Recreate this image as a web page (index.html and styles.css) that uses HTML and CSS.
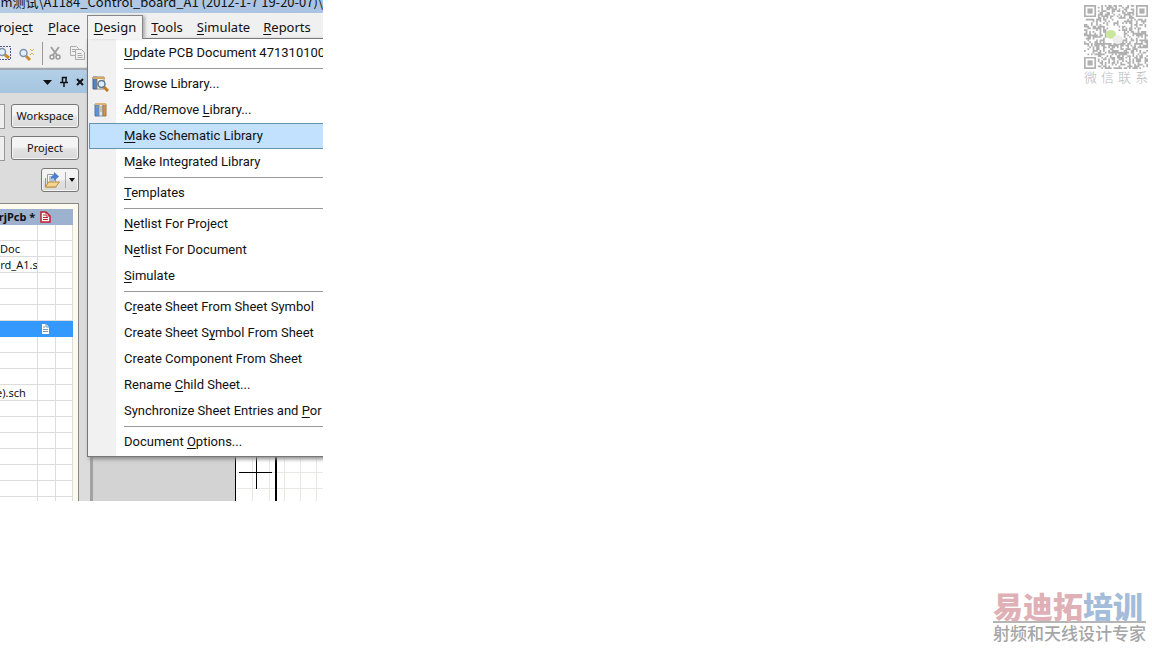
FILE: index.html
```html
<!DOCTYPE html>
<html lang="en">
<head>
<meta charset="utf-8">
<title>Altium Design menu</title>
<link rel="stylesheet" href="styles.css">
</head>
<body>
<main class="page">
  <section class="window">
    <header class="titlebar"><span class="title-text">Altium测试\A1184_Control_board_A1 (2012-1-7 19-20-07)\</span></header>
    <nav class="menubar">
      <button class="menubar-item first">Proje<u>c</u>t</button>
      <button class="menubar-item"><u>P</u>lace</button>
      <button class="menubar-item open"><u>D</u>esign</button>
      <button class="menubar-item"><u>T</u>ools</button>
      <button class="menubar-item"><u>S</u>imulate</button>
      <button class="menubar-item"><u>R</u>eports</button>
    </nav>
    <div class="toolbar">
      <svg class="tool select-zoom" width="13" height="18" viewBox="0 0 13 18"><path d="M0 2.500H10.500V15.500H0" fill="none" stroke="#4a5a9a" stroke-dasharray="2 1"/><path d="M4 10l5 4" stroke="#c98c2c" stroke-width="3"/><circle cx="2" cy="8" r="3.500" fill="#e3f0fa" stroke="#8094ac" stroke-width="1.500"/></svg>
      <svg class="tool" width="18" height="18" viewBox="0 0 18 18"><path d="M8 12l4 4" stroke="#c98c2c" stroke-width="3"/><circle cx="5.500" cy="9" r="3.500" fill="#e3f0fa" stroke="#8094ac" stroke-width="1.500"/><path d="M12 5l2 2 2-2M12 11l2-2 2 2" fill="none" stroke="#d2b356"/></svg>
      <span class="tool-divider"></span>
      <svg class="tool" width="14" height="18" viewBox="0 0 14 18"><path d="M3 3l6 8M11 3L5 11" stroke="#a2a2a2" stroke-width="2"/><circle cx="4" cy="13" r="2" fill="none" stroke="#9a9a9a" stroke-width="1.500"/><circle cx="10" cy="13" r="2" fill="none" stroke="#9a9a9a" stroke-width="1.500"/></svg>
      <svg class="tool" width="17" height="18" viewBox="0 0 17 18"><g fill="#f0f0f0" stroke="#aaa"><path d="M1.500 2.500h6l2 2v7h-8z"/><path d="M6.500 5.500h6l3 3v7h-9z"/><path d="M3 5.500h3M3 7.500h3M8.500 9.500h4M8.500 11.500h5M8.500 13.500h5"/></g></svg>
    </div>
    <div class="workspace">
      <aside class="panel">
        <div class="panel-head">
          <svg width="42" height="12" viewBox="0 0 42 12"><path d="M1 4h9L5.500 9z" fill="#111"/><path d="M20 1.500h5M20.500 1v5.500M24 1v5.500M18 6.500h8M22 7v4" stroke="#111" stroke-width="1.500" fill="none"/><path d="M35 3l6 6M41 3l-6 6" stroke="#111" stroke-width="2"/></svg>
        </div>
        <div class="panel-row"><input class="stub" aria-label="Workspace file"><button class="panel-button">Workspace</button></div>
        <div class="panel-row"><input class="stub" aria-label="Project file"><button class="panel-button">Project</button></div>
        <div class="panel-row end">
          <button class="folder-button" aria-label="Open documents">
            <svg width="34" height="20" viewBox="0 0 34 20"><path d="M4.500 4.500h8v10h-8z" fill="#fff" stroke="#8d9bb0"/><path d="M6 7h5M6 9h5M6 11h5" stroke="#7187b0"/><path d="M2.500 8v9h11" fill="none" stroke="#b98f45"/><path d="M2.500 17l3-5h11l-4 5z" fill="#f5d48e" stroke="#b98f45"/><path d="M8 9c0-3 1-4 3-4V2l5 4.500-5 4.500V8z" fill="#4a7fd0"/><path d="M22.500 2v16" stroke="#aaa"/><path d="M26 8h6l-3 4z" fill="#111"/></svg>
          </button>
        </div>
        <div class="tree">
          <table class="files">
            <colgroup><col class="name-col"><col class="icon-col"><col class="icon-col"></colgroup>
            <tbody>
              <tr class="project-row"><td>PrjPcb *</td><td><svg width="11" height="12" viewBox="0 0 11 12"><path d="M1 1h5l4 4v6H1z" fill="#fff" stroke="#c01f2c" stroke-width="1.500"/><path d="M3 4h2M3 6.500h5M3 8.500h5M6 1v4h4" stroke="#c01f2c" fill="none"/></svg></td><td></td></tr>
              <tr><td></td><td></td><td></td></tr>
              <tr><td>Doc</td><td></td><td></td></tr>
              <tr class="long-name"><td>ard_A1.s</td><td></td><td></td></tr>
              <tr><td></td><td></td><td></td></tr>
              <tr><td></td><td></td><td></td></tr>
              <tr><td></td><td></td><td></td></tr>
              <tr class="selected"><td></td><td><svg width="11" height="12" viewBox="0 0 11 12"><path d="M2 1h4l3 3v7H2z" fill="#fff"/><path d="M3 4h2M3 6.500h5M3 8.500h5M6 1v3h3" stroke="#7f93ad" fill="none"/></svg></td><td></td></tr>
              <tr><td></td><td></td><td></td></tr>
              <tr><td></td><td></td><td></td></tr>
              <tr><td></td><td></td><td></td></tr>
              <tr class="sheet-name"><td>e).sch</td><td></td><td></td></tr>
              <tr><td></td><td></td><td></td></tr>
              <tr><td></td><td></td><td></td></tr>
              <tr><td></td><td></td><td></td></tr>
              <tr><td></td><td></td><td></td></tr>
              <tr><td></td><td></td><td></td></tr>
              <tr><td></td><td></td><td></td></tr>
              <tr><td></td><td></td><td></td></tr>
            </tbody>
          </table>
        </div>
      </aside>
      <div class="editor">
        <svg class="sheet" width="88" height="44" viewBox="0 0 88 44"><path fill="#fff" d="M0 0h88v44H0z"/><path d="M17.500 0v44M34.500 0v44M49.500 0v44M65.500 0v44M81.500 0v44M2 15.500h86M2 31.500h86" stroke="#e9e7e4"/><path d="M.5 0v44" stroke="#000"/><path d="M41 0v44" stroke="#000" stroke-width="2"/><path d="M21.500 0v32M4 15.500h33" stroke="#000"/></svg>
      </div>
    </div>
    <div class="menu" role="menu">
      <button class="menu-item" role="menuitem"><span class="menu-icon"></span><span><u>U</u>pdate PCB Document 471310100</span></button>
      <hr class="menu-line">
      <button class="menu-item" role="menuitem"><span class="menu-icon"><svg width="17" height="17" viewBox="0 0 17 17"><path d="M1 2h4v12H1z" fill="#4f84c4" stroke="#4a5e80"/><path d="M5 2h7v12H5z" fill="#fbfbf8" stroke="#8c8c80"/><path d="M1 2h12v2H1z" fill="#d8a55c"/><path d="M12 12l4 4" stroke="#c4791e" stroke-width="3"/><circle cx="9.500" cy="9" r="3.500" fill="#d9edfa" stroke="#62788f" stroke-width="1.500"/></svg></span><span><u>B</u>rowse Library...</span></button>
      <button class="menu-item" role="menuitem"><span class="menu-icon"><svg width="17" height="17" viewBox="0 0 17 17"><path d="M3 3h4v12H3z" fill="#5c92d8" stroke="#5976a4"/><path d="M7 3h4v12H7z" fill="#dce8f4" stroke="#8195b0"/><path d="M11 3h3v12h-3z" fill="#c99552" stroke="#a57840"/><path d="M3 2h11v2H3z" fill="#dbb377"/><path d="M4 6h2M8 6h2M8 8h2M8 10h2" stroke="#b59a6d"/></svg></span><span>Add/Remove <u>L</u>ibrary...</span></button>
      <button class="menu-item active" role="menuitem"><span class="menu-icon"></span><span><u>M</u>ake Schematic Library</span></button>
      <button class="menu-item" role="menuitem"><span class="menu-icon"></span><span>M<u>a</u>ke Integrated Library</span></button>
      <hr class="menu-line">
      <button class="menu-item" role="menuitem"><span class="menu-icon"></span><span><u>T</u>emplates</span></button>
      <hr class="menu-line">
      <button class="menu-item" role="menuitem"><span class="menu-icon"></span><span><u>N</u>etlist For Project</span></button>
      <button class="menu-item" role="menuitem"><span class="menu-icon"></span><span>N<u>e</u>tlist For Document</span></button>
      <button class="menu-item" role="menuitem"><span class="menu-icon"></span><span><u>S</u>imulate</span></button>
      <hr class="menu-line">
      <button class="menu-item" role="menuitem"><span class="menu-icon"></span><span>C<u>r</u>eate Sheet From Sheet Symbol</span></button>
      <button class="menu-item" role="menuitem"><span class="menu-icon"></span><span>Create Sheet S<u>y</u>mbol From Sheet</span></button>
      <button class="menu-item" role="menuitem"><span class="menu-icon"></span><span>Create Component From Sheet</span></button>
      <button class="menu-item" role="menuitem"><span class="menu-icon"></span><span>Rename <u>C</u>hild Sheet...</span></button>
      <button class="menu-item" role="menuitem"><span class="menu-icon"></span><span>Synchronize Sheet Entries and <u>P</u>or</span></button>
      <hr class="menu-line">
      <button class="menu-item" role="menuitem"><span class="menu-icon"></span><span>Document <u>O</u>ptions...</span></button>
    </div>
  </section>
  <aside class="marks">
    <div class="contact">
      <svg id="qr" class="qr" viewBox="0 0 37 37" role="img" aria-label="QR code"></svg>
      <div class="contact-label">微信联系</div>
    </div>
    <div class="brand">
      <div class="brand-name"><span class="brand-red">易迪拓</span><span class="brand-blue">培训</span></div>
      <div class="brand-line">射频和天线设计专家</div>
    </div>
  </aside>
</main>
<script src="qr.js"></script>
</body>
</html>
```
FILE: styles.css
```css
* { box-sizing: border-box; }
body {
  margin: 0;
  background: #fff;
  color: #111;
  font: 13px/16px Roboto, "Noto Sans CJK SC", sans-serif;
}
button {
  margin: 0;
  padding: 0;
  border: 0;
  background: none;
  color: inherit;
  font: inherit;
  white-space: nowrap;
}
svg { display: block; flex: none; }
u { text-underline-offset: 2px; text-decoration-thickness: 1px; text-decoration-skip-ink: none; }

.page {
  display: flex;
  justify-content: space-between;
  align-items: flex-start;
  min-height: 100vh;
}
.window {
  position: relative;
  width: 323px;
  overflow: hidden;
  background: #f0f0f0;
}
.titlebar {
  display: flex;
  align-items: flex-end;
  justify-content: flex-end;
  height: 13px;
  padding-bottom: 3px;
  overflow: hidden;
  background: linear-gradient(90deg, #b4cbe4, #a9c3e2);
  font-family: "Noto Sans CJK SC", sans-serif;
  white-space: nowrap;
}
.menubar {
  display: grid;
  grid-template-columns: 41px 46px 56px 48px 65px 62px;
  height: 26px;
  padding-top: 2px;
  font-family: "Noto Sans", sans-serif;
}
.menubar-item { height: 24px; padding-bottom: 1px; }
.menubar-item.first {
  display: flex;
  align-items: center;
  justify-content: flex-end;
  padding-right: 8px;
}
.menubar-item.open {
  position: relative;
  z-index: 2;
  border: 1px solid #868686;
  border-bottom: 0;
  background: #f3f3f3;
  box-shadow: 3px 0 3px -1px #aaa;
}
.toolbar {
  display: flex;
  align-items: center;
  height: 29px;
  border-bottom: 1px solid #ddd;
}
.select-zoom { margin-right: 5px; }
.tool-divider { width: 1px; height: 23px; margin: 0 5px 0 6px; background: #999; }
.toolbar .tool:last-child { margin-left: 7px; }

.workspace {
  display: grid;
  grid-template-columns: 90px 1fr;
  height: 433px;
}
.panel {
  display: flex;
  flex-direction: column;
  gap: 8px;
  overflow: hidden;
  padding-right: 11px;
  background: #dcdcdc;
}
.panel-head {
  display: flex;
  align-items: center;
  justify-content: flex-end;
  flex: none;
  height: 25px;
  margin: 0 -11px 3px 0;
  padding-right: 6px;
  border-top: 2px solid #a2a8ae;
  background: linear-gradient(#b4d0e8, #a5c4df);
}
.panel-row { display: flex; align-items: center; gap: 6px; height: 24px; }
.panel-row.end { justify-content: flex-end; }
.stub {
  width: 5px;
  height: 25px;
  padding: 0;
  border: 1px solid #999;
  border-left: 0;
  background: #efefef;
}
.panel-button, .folder-button {
  flex: 1;
  height: 24px;
  border: 1px solid #777;
  border-radius: 3px;
  background: linear-gradient(#f4f4f4 45%, #e2e2e2 55%, #dadada);
  box-shadow: inset 0 0 0 1px #f5f5f5;
  font: 11px/16px "Noto Sans", sans-serif;
}
.folder-button { flex: 0 0 38px; padding: 0 1px; }
.tree {
  flex: 1;
  min-height: 0;
  margin-top: 3px;
  padding: 5px 5px 0 0;
  overflow: hidden;
  border-top: 1px solid #888;
  border-right: 1px solid #888;
  background: #fdfaf0;
}
.files {
  width: 73px;
  border-spacing: 0;
  table-layout: fixed;
  background: #fff;
  font: 11px/15px "Noto Sans", sans-serif;
}
.name-col { width: 38px; }
.files td {
  height: 16px;
  padding: 0;
  overflow: hidden;
  border-right: 1px solid #dcdcdc;
  border-bottom: 1px solid #dcdcdc;
  white-space: nowrap;
}
.files td svg { margin-left: 2px; }
.files .project-row td {
  border-color: #9cb2cf;
  background: #9cb2cf;
  font-weight: 700;
}
.project-row td:first-child { text-indent: -8px; }
.long-name td:first-child { text-indent: -6px; }
.sheet-name td:first-child { text-indent: -4px; }
.files .selected td { border-color: #3399ff; background: #3399ff; }

.editor {
  display: flex;
  align-items: flex-end;
  justify-content: flex-end;
  border-left: 3px solid #a2a2a2;
  background: #d3d3d3;
}

.menu {
  position: absolute;
  top: 38px;
  left: 87px;
  width: 280px;
  padding: 1px 0;
  border: 1px solid #777;
  background: linear-gradient(90deg, #f1f1f1 28px, #fff 28px);
  box-shadow: 2px 2px 4px #888;
}
.menu-item {
  display: flex;
  align-items: center;
  width: 100%;
  height: 26px;
  padding-bottom: 1px;
  text-align: left;
}
.menu-item.active {
  margin-left: 1px;
  border: 1px solid #6393b0;
  background: #c2e0ff;
}
.menu-icon { flex: none; width: 36px; padding-left: 4px; }
.active .menu-icon { width: 34px; }
.menu-line { height: 1px; margin: 2px 0 2px 36px; border: 0; background: #999; }

.marks {
  display: flex;
  flex-direction: column;
  align-items: flex-end;
  justify-content: space-between;
  min-height: 100vh;
  padding: 5px 4px 5px 0;
}
.contact { width: 64px; color: #b8b8b8; }
.qr { width: 64px; height: 64px; }
.contact-label {
  font: 300 13px/16px "Noto Sans CJK SC", sans-serif;
  text-align-last: justify;
}
.brand { margin-right: 2px; white-space: nowrap; }
.brand-name {
  display: flex;
  border-bottom: 2px solid #b5b5b5;
  font: 900 30px/32px "Noto Sans CJK SC", sans-serif;
}
.brand-red { color: #dfb0b5; }
.brand-blue { color: #a3bcd9; }
.brand-line {
  color: #a5a5a5;
  font: 500 17px/20px "Noto Sans CJK SC", sans-serif;
}
```
FILE: qr.js
```js
// Draws the contact code: three finder squares, data modules and the chat bubbles.
const size = 37;
let seed = 20;
const next = () => (seed = (seed * 1103515245 + 12345) % 2147483648) / 2147483648;
const inFinder = (x, y) =>
  (x < 8 && y < 8) || (x > size - 9 && y < 8) || (x < 8 && y > size - 9);
let path = "";
for (let y = 0; y < size; y++) {
  for (let x = 0; x < size; x++) {
    const dark = next() > 0.5;
    const center = Math.abs(x - 17) < 5 && Math.abs(y - 18) < 4;
    if (dark && !center && !inFinder(x, y)) path += `M${x} ${y}h1v1h-1z`;
  }
}
let finders = "";
for (const [x, y] of [[0, 0], [size - 7, 0], [0, size - 7]]) {
  finders += `<path d="M${x + 0.5} ${y + 0.5}h6v6h-6z" fill="none" stroke="#b0b0b0"/><path d="M${x + 2} ${y + 2}h3v3h-3z" fill="#b0b0b0"/>`;
}
document.getElementById("qr").innerHTML =
  `<path d="${path}" fill="#b0b0b0"/>${finders}` +
  `<ellipse cx="15.500" cy="17" rx="3" ry="2.500" fill="#c9e79b"/><ellipse cx="19.500" cy="20" rx="3" ry="2.500" fill="#eee"/>`;
```
